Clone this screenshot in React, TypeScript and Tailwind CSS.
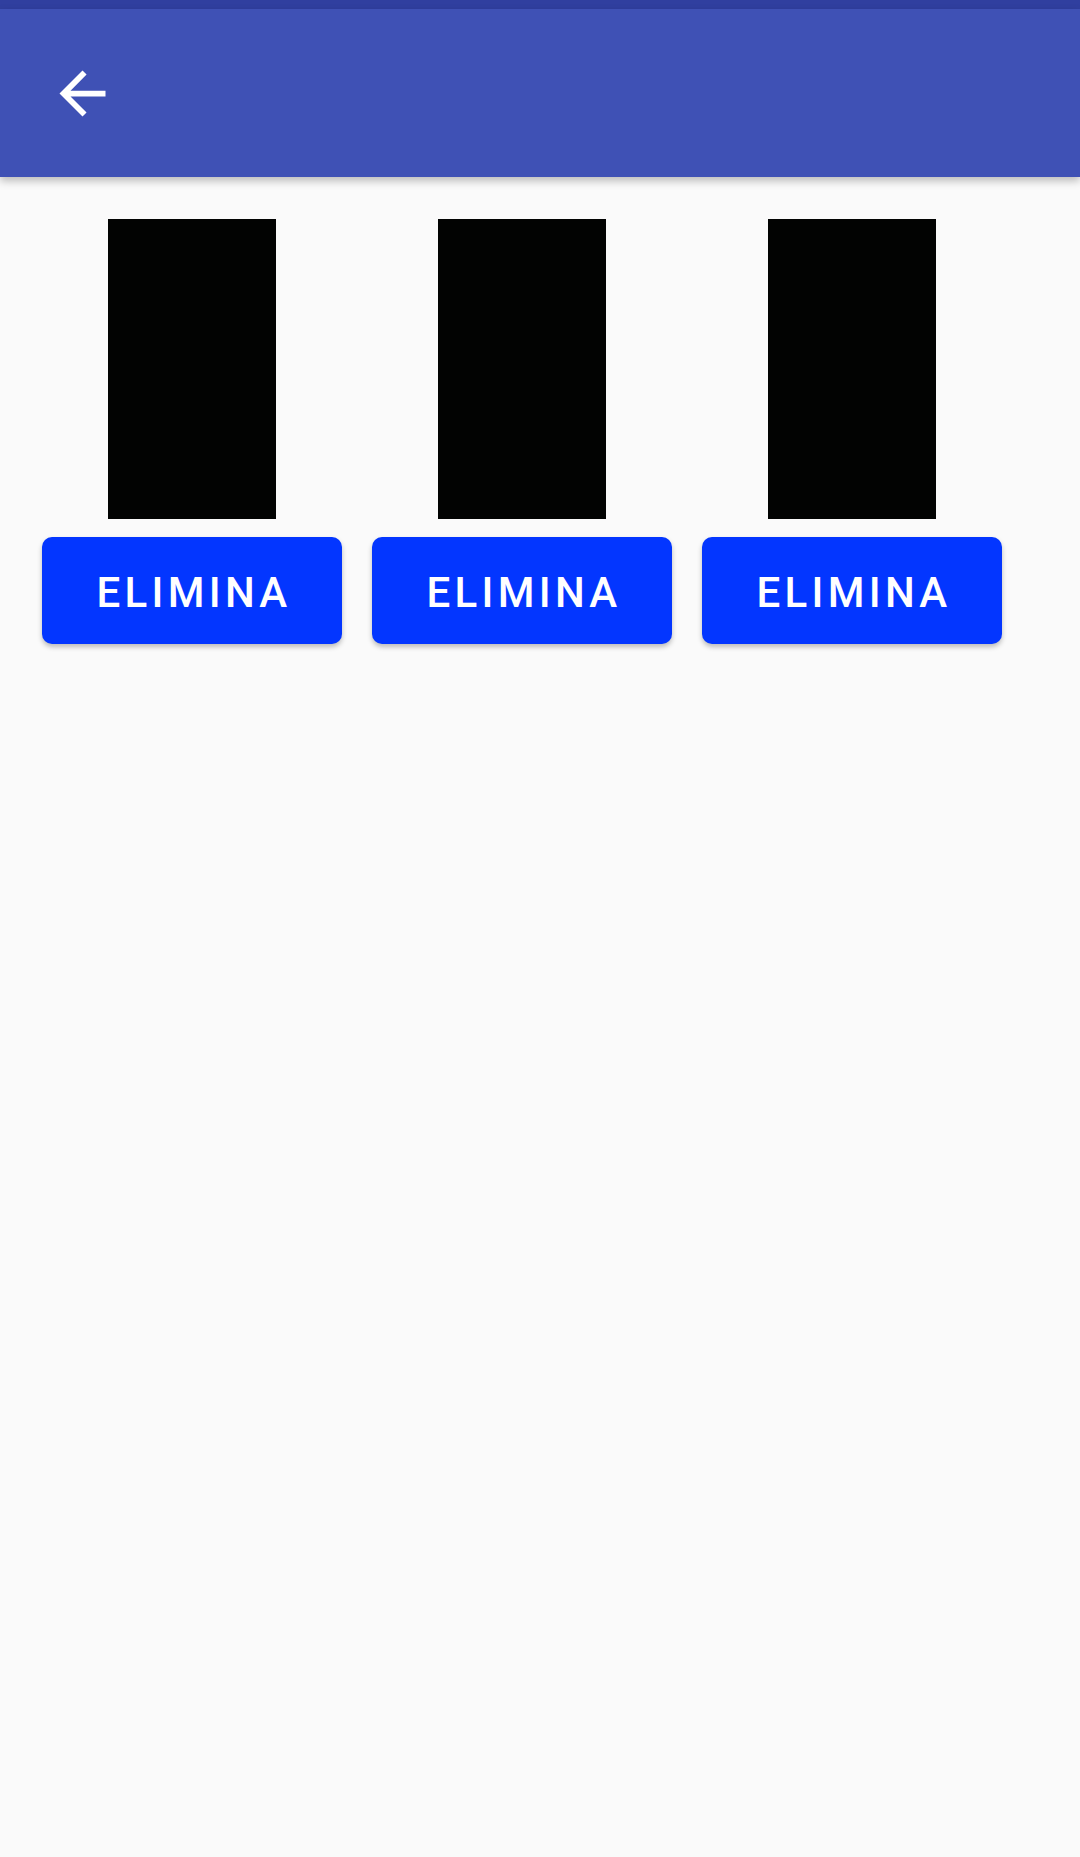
const items = [1, 2, 3];

export default function App() {
  return (
    <div className="min-h-[1857px] w-[1080px] bg-[#fafafa] font-['Roboto',sans-serif]">
      <div className="h-[9px] bg-[#303f9f]" />
      <div className="relative z-10 flex h-[168px] items-center bg-[#3f51b5] pl-[48px] shadow-[0_4px_8px_rgba(0,0,0,0.25)]">
        <svg width="69" height="69" viewBox="0 0 24 24" fill="white">
          <path d="M20 11H7.83l5.59-5.59L12 4l-8 8 8 8 1.41-1.41L7.83 13H20v-2z" />
        </svg>
      </div>
      <div className="flex gap-[30px] pl-[42px] pt-[42px]">
        {items.map((i) => (
          <div key={i} className="flex w-[300px] flex-col items-center gap-[18px]">
            <div className="h-[300px] w-[168px] bg-[#020302]" />
            <button className="flex h-[107px] w-[300px] items-center justify-center rounded-[10px] bg-[#0336ff] pl-[4px] pt-[3px] text-[42px] font-medium tracking-[4.3px] text-white shadow-[0_3px_5px_rgba(0,0,0,0.25)]">
              ELIMINA
            </button>
          </div>
        ))}
      </div>
    </div>
  );
}
